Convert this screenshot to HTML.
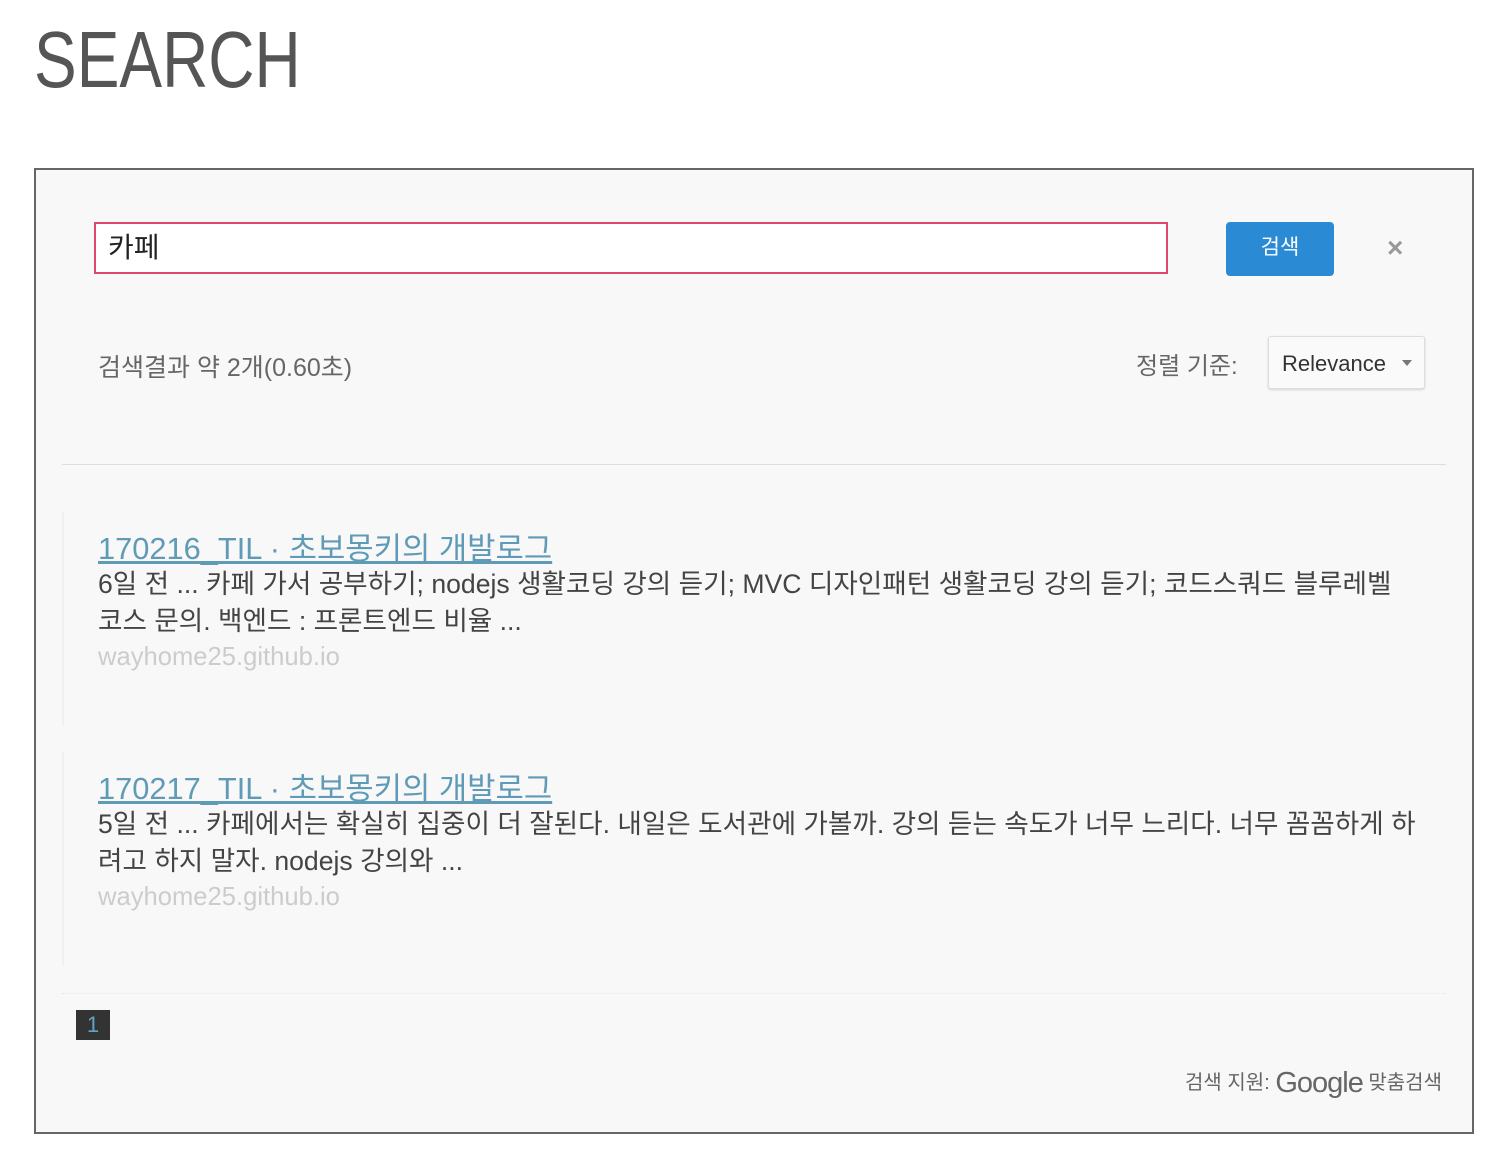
<!DOCTYPE html>
<html><head><meta charset="utf-8"><style>
body{margin:0;background:#fff;font-family:"Liberation Sans","Noto Sans CJK KR",sans-serif;width:1510px;height:1162px;position:relative;overflow:hidden}
.a{position:absolute;white-space:nowrap}
h1{position:absolute;left:34px;top:14px;margin:0;font-weight:normal;font-size:80px;color:#555;transform:scaleX(0.8);transform-origin:0 0}
.box{position:absolute;left:34px;top:168px;width:1436px;height:962px;border:2px solid #666;background:#f8f8f8}
.res{position:absolute;left:62px;width:1380px;border-left:2px solid #f0f0f0}
.t{font-size:30.8px;color:#5f9ab6;text-decoration:underline;position:absolute;left:34px}
.s{font-size:26.6px;color:#444;position:absolute;left:34px;line-height:37px}
.u{font-size:25.6px;color:#ccc;position:absolute;left:34px}
</style></head><body>
<h1>SEARCH</h1>
<div class="box"></div>
<div class="a" style="left:94px;top:222px;width:1070px;height:48px;border:2px solid #e0486a;background:#fff"></div>
<div class="a" style="left:108px;top:226px;font-size:28px;color:#222">카페</div>
<div class="a" style="left:1226px;top:222px;width:108px;height:54px;background:#2a8bd4;border-radius:4px;color:#fff;font-size:21px;text-align:center;line-height:52px">검색</div>
<div class="a" style="left:1387px;top:232px;font-size:28px;color:#999;font-weight:bold">×</div>
<div class="a" style="left:98px;top:348px;font-size:25px;color:#666">검색결과 약 2개(0.60초)</div>
<div class="a" style="left:1136px;top:346px;font-size:24px;color:#666">정렬 기준:</div>
<div class="a" style="left:1268px;top:336px;width:155px;height:51px;border:1px solid #ddd;border-radius:3px;background:#fafafa;box-shadow:0 1px 2px rgba(0,0,0,.15)"></div>
<div class="a" style="left:1282px;top:351px;font-size:22px;color:#333">Relevance</div>
<div class="a" style="left:1402px;top:360px;width:0;height:0;border-left:5px solid transparent;border-right:5px solid transparent;border-top:6px solid #777"></div>
<div class="a" style="left:62px;top:464px;width:1384px;height:1px;background:#ddd"></div>
<div class="res" style="top:512px;height:213px">
<div class="t" style="top:11px">170216_TIL · 초보몽키의 개발로그</div>
<div class="s" style="top:54px">6일 전 ... 카페 가서 공부하기; nodejs 생활코딩 강의 듣기; MVC 디자인패턴 생활코딩 강의 듣기; 코드스쿼드 블루레벨<br>코스 문의. 백엔드 : 프론트엔드 비율 ...</div>
<div class="u" style="top:131px">wayhome25.github.io</div>
</div>
<div class="res" style="top:752px;height:213px">
<div class="t" style="top:11px">170217_TIL · 초보몽키의 개발로그</div>
<div class="s" style="top:54px">5일 전 ... 카페에서는 확실히 집중이 더 잘된다. 내일은 도서관에 가볼까. 강의 듣는 속도가 너무 느리다. 너무 꼼꼼하게 하<br>려고 하지 말자. nodejs 강의와 ...</div>
<div class="u" style="top:131px">wayhome25.github.io</div>
</div>
<div class="a" style="left:62px;top:993px;width:1384px;border-top:1px dotted #e6e6e6"></div>
<div class="a" style="left:76px;top:1010px;width:34px;height:30px;background:#333;color:#5fa5c9;font-size:22px;text-align:center;line-height:30px">1</div>
<div class="a" style="right:68px;top:1066px;font-size:20px;color:#666">검색 지원: <span style="font-size:29px;color:#666;vertical-align:-3px;letter-spacing:-1px">Google</span> 맞춤검색</div>
</body></html>
